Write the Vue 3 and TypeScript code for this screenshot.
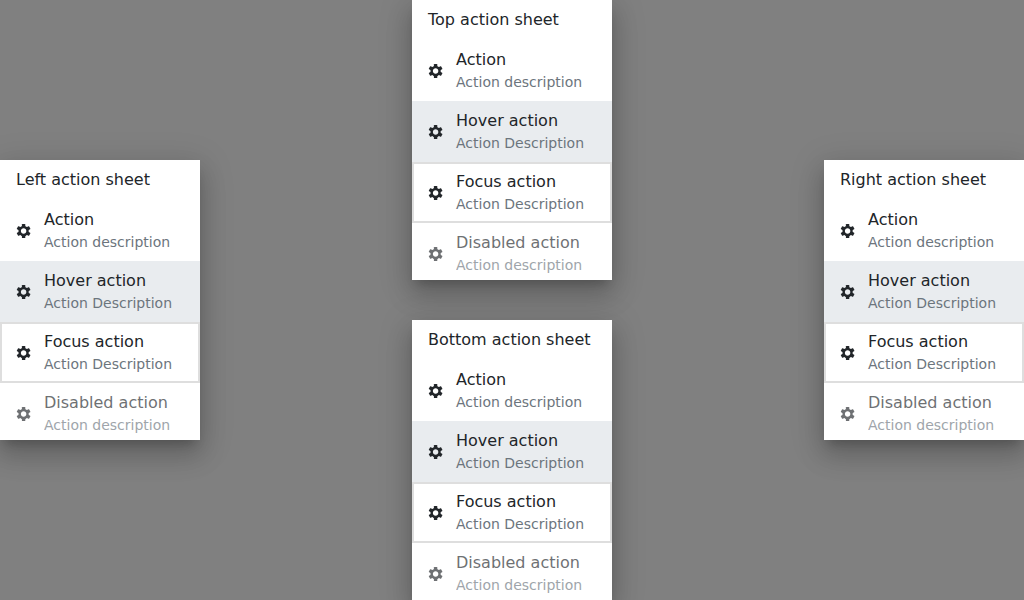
<script setup lang="ts">
interface Action {
  title: string
  description: string
  state: 'normal' | 'hover' | 'focus' | 'disabled'
}

interface Sheet {
  side: 'left' | 'top' | 'bottom' | 'right'
  title: string
}

const actions: Action[] = [
  { title: 'Action', description: 'Action description', state: 'normal' },
  { title: 'Hover action', description: 'Action Description', state: 'hover' },
  { title: 'Focus action', description: 'Action Description', state: 'focus' },
  { title: 'Disabled action', description: 'Action description', state: 'disabled' },
]

const sheets: Sheet[] = [
  { side: 'left', title: 'Left action sheet' },
  { side: 'top', title: 'Top action sheet' },
  { side: 'bottom', title: 'Bottom action sheet' },
  { side: 'right', title: 'Right action sheet' },
]
</script>

<template>
  <main class="stage">
    <section v-for="sheet in sheets" :key="sheet.side" class="sheet" :class="sheet.side">
      <header class="heading">{{ sheet.title }}</header>
      <div v-for="action in actions" :key="action.title" class="action" :class="action.state">
        <svg class="icon" viewBox="0 0 16 16" aria-hidden="true">
          <g transform="translate(7.6 8)">
            <circle r="3.95" fill="none" stroke="currentColor" stroke-width="2.4" />
            <path
              v-for="angle in [0, 60, 120, 180, 240, 300]"
              :key="angle"
              :transform="`rotate(${angle})`"
              d="M-1.7-4.4V-6.5Q-1.7-7.1-1.1-7.1H1.1Q1.7-7.1 1.7-6.5V-4.4z"
            />
          </g>
        </svg>
        <div class="text">
          <div class="title">{{ action.title }}</div>
          <div class="description">{{ action.description }}</div>
        </div>
      </div>
    </section>
  </main>
</template>

<style>
body {
  background: #808080;
}
</style>

<style scoped>
.stage {
  display: grid;
  grid-template-columns: 200px 200px 200px;
  grid-template-rows: 280px 280px;
  justify-content: space-between;
  row-gap: 40px;
  height: 600px;
  overflow: hidden;
  background: #808080;
  color: #212529;
  font-family: "DejaVu Sans", sans-serif;
  font-size: 16px;
  line-height: 24px;
}

.sheet {
  height: 280px;
  overflow: hidden;
  background: #fff;
  box-shadow:
    0 8px 10px -5px rgba(0, 0, 0, 0.2),
    0 16px 24px 2px rgba(0, 0, 0, 0.14),
    0 6px 30px 5px rgba(0, 0, 0, 0.12);
}

.left,
.right {
  grid-row: 1 / 3;
  align-self: center;
}

.left {
  grid-column: 1;
}

.top {
  grid-column: 2;
  grid-row: 1;
}

.bottom {
  grid-column: 2;
  grid-row: 2;
}

.right {
  grid-column: 3;
}

.heading {
  padding: 8px 16px;
  white-space: nowrap;
}

.action {
  display: flex;
  align-items: center;
  gap: 12px;
  height: 61px;
  box-sizing: border-box;
  padding: 8px 16px;
  white-space: nowrap;
}

.hover {
  background: #e9ecef;
}

.focus {
  box-shadow: inset 0 0 0 2px #dedede;
}

.disabled > * {
  opacity: 0.65;
}

.icon {
  flex: none;
  width: 16px;
  height: 16px;
  fill: currentColor;
}

.description {
  color: #6c757d;
  font-size: 14px;
  line-height: 21px;
}
</style>
